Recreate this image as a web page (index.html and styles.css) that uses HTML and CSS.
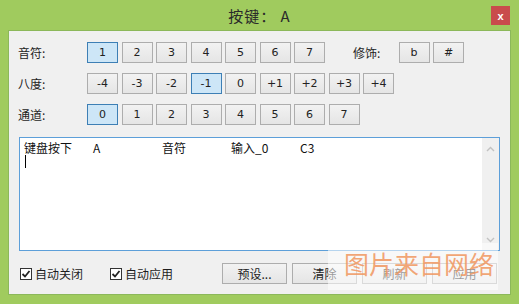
FILE: index.html
```html
<!DOCTYPE html>
<html lang="zh-cn">
<head>
    <meta charset="UTF-8">
    <title>按键： A</title>
    <link rel="stylesheet" href="styles.css">
</head>
<body>
    <div class="janela">
        <div class="titulo">
            <span class="titulo-texto">按键： A</span>
            <span class="fechar">x</span>
        </div>

        <div class="cliente">
            <div class="linha">
                <span class="rotulo">音符:</span>
                <span class="botao ativo">1</span>
                <span class="botao">2</span>
                <span class="botao">3</span>
                <span class="botao">4</span>
                <span class="botao">5</span>
                <span class="botao">6</span>
                <span class="botao">7</span>
                <span class="rotulo rotulo-mod">修饰:</span>
                <span class="botao">b</span>
                <span class="botao">#</span>
            </div>

            <div class="linha">
                <span class="rotulo">八度:</span>
                <span class="botao">-4</span>
                <span class="botao">-3</span>
                <span class="botao">-2</span>
                <span class="botao ativo">-1</span>
                <span class="botao">0</span>
                <span class="botao">+1</span>
                <span class="botao">+2</span>
                <span class="botao">+3</span>
                <span class="botao">+4</span>
            </div>

            <div class="linha">
                <span class="rotulo">通道:</span>
                <span class="botao ativo">0</span>
                <span class="botao">1</span>
                <span class="botao">2</span>
                <span class="botao">3</span>
                <span class="botao">4</span>
                <span class="botao">5</span>
                <span class="botao">6</span>
                <span class="botao">7</span>
            </div>

            <div class="caixa">
                <div class="texto">
                    <div class="registro">
                        <span class="col">键盘按下</span><span class="col">A</span><span class="col">音符</span><span class="col">输入_0</span><span class="col">C3</span>
                    </div>
                    <div class="cursor"></div>
                </div>
                <div class="rolagem">
                    <svg width="9" height="6" viewBox="0 0 9 6"><path d="M1 5 L4.5 1.5 L8 5" fill="none" stroke="#c2c2c2" stroke-width="1.4"/></svg>
                    <svg width="9" height="6" viewBox="0 0 9 6"><path d="M1 1 L4.5 4.5 L8 1" fill="none" stroke="#c2c2c2" stroke-width="1.4"/></svg>
                </div>
            </div>

            <div class="rodape">
                <label class="opcao">
                    <svg class="marca" width="12" height="12" viewBox="0 0 12 12"><rect x="0.5" y="0.5" width="11" height="11" fill="#fff" stroke="#333"/><path d="M2.5 6 L5 8.5 L9.5 3" fill="none" stroke="#222" stroke-width="1.8"/></svg>
                    自动关闭
                </label>
                <label class="opcao">
                    <svg class="marca" width="12" height="12" viewBox="0 0 12 12"><rect x="0.5" y="0.5" width="11" height="11" fill="#fff" stroke="#333"/><path d="M2.5 6 L5 8.5 L9.5 3" fill="none" stroke="#222" stroke-width="1.8"/></svg>
                    自动应用
                </label>
                <div class="acoes">
                    <span class="botao largo">预设...</span>
                    <span class="botao largo">清除</span>
                    <span class="botao largo">刷新</span>
                    <span class="botao largo">应用</span>
                </div>
            </div>
        </div>

        <div class="marca-agua">图片来自网络</div>
    </div>
</body>
</html>
```

FILE: styles.css
```css
* {
    box-sizing: border-box;
    margin: 0;
    padding: 0;
}

body {
    background-color: #a0cb5e;
    font-family: "Liberation Sans", "Noto Sans CJK SC", sans-serif;
}

.janela {
    position: relative;
    width: 519px;
    height: 304px;
    background-color: #a0cb5e;
    display: flex;
    flex-direction: column;
}

.titulo {
    height: 30px;
    display: flex;
    align-items: center;
    justify-content: center;
    position: relative;
}

.titulo-texto {
    font-family: "Noto Sans CJK SC", sans-serif;
    font-size: 15px;
    color: #2a2a2a;
    letter-spacing: 1px;
}

.fechar {
    position: absolute;
    top: 6px;
    right: 9px;
    width: 19px;
    height: 19px;
    background-color: #c94c4c;
    color: #fff;
    font-weight: bold;
    font-size: 11px;
    display: flex;
    align-items: center;
    justify-content: center;
}

.cliente {
    margin: 0 8px 9px 8px;
    flex: 1;
    background-color: #f0f0f0;
    border: 1px solid #8cb85a;
    padding: 11px 10px 0 9px;
    display: flex;
    flex-direction: column;
}

.linha {
    display: flex;
    align-items: center;
    height: 21px;
    margin-bottom: 10px;
    gap: 3.5px;
}

.rotulo {
    font-family: "Noto Sans CJK SC", sans-serif;
    font-size: 12px;
    color: #1e1e1e;
    width: 65.5px;
}

.rotulo-mod {
    width: 42px;
    margin-left: 24.5px;
}

.botao {
    width: 31px;
    height: 21px;
    border: 1px solid #adadad;
    background: linear-gradient(#f2f2f2, #e5e5e5);
    font-size: 11px;
    color: #222;
    display: flex;
    align-items: center;
    justify-content: center;
    font-family: "DejaVu Sans", "Noto Sans CJK SC", sans-serif;
}

.botao.ativo {
    background: #cde6f7;
    border-color: #3d7fb5;
}

.caixa {
    margin: 2px 0 0 1px;
    height: 114px;
    width: 481px;
    background: #fff;
    border: 1px solid #5d9fd9;
    display: flex;
}

.texto {
    flex: 1;
    padding: 3px 4px;
    font-family: "Noto Sans CJK SC", sans-serif;
    font-size: 12px;
    color: #111;
}

.registro {
    display: flex;
    height: 13px;
    line-height: 13px;
}

.col {
    width: 69px;
}

.cursor {
    width: 1px;
    height: 13px;
    margin: 1px 0 0 1px;
    background: #000;
}

.rolagem {
    width: 17px;
    background: #f0f0f0;
    display: flex;
    flex-direction: column;
    align-items: center;
    justify-content: space-between;
    padding: 8px 0 7px 0;
}

.rodape {
    margin-top: 12px;
    display: flex;
    align-items: center;
    height: 21px;
}

.opcao {
    display: flex;
    align-items: center;
    gap: 3px;
    font-family: "Noto Sans CJK SC", sans-serif;
    font-size: 12px;
    color: #1e1e1e;
    margin-left: 2px;
    width: 88px;
}

.acoes {
    display: flex;
    gap: 5px;
    margin-left: 24px;
}

.botao.largo {
    width: 65px;
    font-family: "Noto Sans CJK SC", sans-serif;
    font-size: 12px;
}

.marca-agua {
    position: absolute;
    left: 328px;
    top: 243px;
    width: 170px;
    height: 47px;
    background: rgba(255, 255, 255, 0.55);
    color: rgba(240, 150, 95, 0.85);
    font-family: "Noto Sans CJK SC", sans-serif;
    font-size: 25px;
    line-height: 40px;
    padding-left: 16px;
}
```
